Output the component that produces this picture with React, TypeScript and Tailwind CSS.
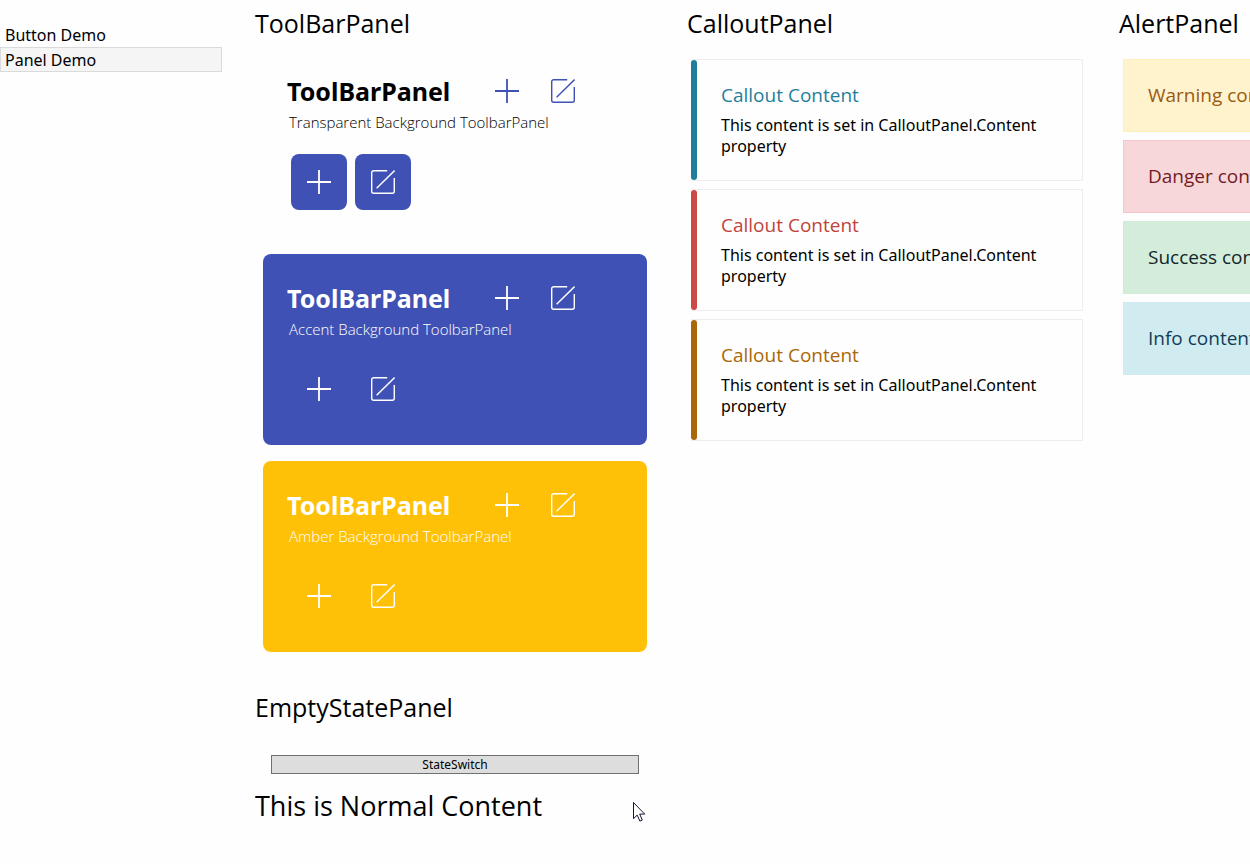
import { useState } from "react";

function PlusIcon() {
  return (
    <svg width="24" height="24" viewBox="0 0 24 24" fill="none" stroke="currentColor" strokeWidth="1.8" aria-hidden="true">
      <path d="M12 0v24M0 12h24" />
    </svg>
  );
}

function EditIcon() {
  return (
    <svg width="24" height="24" viewBox="0 0 24 24" fill="none" stroke="currentColor" strokeWidth="1.4" aria-hidden="true">
      <path d="M16.2 0.7H2.7a2 2 0 0 0-2 2v18.6a2 2 0 0 0 2 2h18.6a2 2 0 0 0 2-2V8" />
      <path d="M5.6 18.2L23.6 0.6" />
    </svg>
  );
}

type ToolBarProps = { subtitle: string; panel: string; iconColor: string; action: string };

function ToolBarPanel({ subtitle, panel, iconColor, action }: ToolBarProps) {
  const button = "flex size-14 items-center justify-center rounded-lg";
  return (
    <article className={`mx-2 flex h-[191px] flex-col rounded-lg px-6 pt-4 ${panel}`}>
      <div className="flex">
        <div className="flex w-48 shrink-0 flex-col pt-3">
          <h3 className="text-[25px] leading-8 font-bold">ToolBarPanel</h3>
          <p className="pl-[2px] font-['Open_Sans',sans-serif] text-[15px] leading-[30px] font-light whitespace-nowrap">{subtitle}</p>
        </div>
        <div className={`flex ${iconColor}`}>
          <button type="button" aria-label="Add" className={button}><PlusIcon /></button>
          <button type="button" aria-label="Edit" className={button}><EditIcon /></button>
        </div>
      </div>
      <div className="mt-[17px] flex gap-2 pl-1 text-white">
        <button type="button" aria-label="Add item" className={`${button} ${action}`}><PlusIcon /></button>
        <button type="button" aria-label="Edit item" className={`${button} ${action}`}><EditIcon /></button>
      </div>
    </article>
  );
}

const toolbars: ToolBarProps[] = [
  { subtitle: "Transparent Background ToolbarPanel", panel: "text-black", iconColor: "text-[#3f51b5]", action: "bg-[#3f51b5]" },
  { subtitle: "Accent Background ToolbarPanel", panel: "bg-[#3f51b5] text-white", iconColor: "text-white", action: "" },
  { subtitle: "Amber Background ToolbarPanel", panel: "bg-[#ffc107] text-white", iconColor: "text-white", action: "" },
];

const callouts = [
  { bar: "bg-[#1f7f9b]", title: "text-[#1f7f9b]" },
  { bar: "bg-[#cd4945]", title: "text-[#c0433a]" },
  { bar: "bg-[#aa6708]", title: "text-[#aa6708]" },
];

const alerts = [
  { text: "Warning content", style: "border-[#ffeeba] bg-[#fff3cd] text-[#9a5a14]" },
  { text: "Danger content", style: "border-[#f5c6cb] bg-[#f8d7da] text-[#721c24]" },
  { text: "Success content", style: "border-[#d1ebd8] bg-[#d4edda] text-[#12262b]" },
  { text: "Info content", style: "border-[#cfeaf0] bg-[#d1ecf1] text-[#123c58]" },
];

const heading = "pb-[2px] font-['Open_Sans',sans-serif] text-[25px] leading-[30px]";

export default function App() {
  const [empty, setEmpty] = useState(false);
  const [page, setPage] = useState("Panel Demo");

  return (
    <div className="flex min-h-screen overflow-hidden bg-[#fefefe] font-['Noto_Sans',sans-serif] text-black">
      <nav className="w-[222px] shrink-0 pt-[22px]">
        {["Button Demo", "Panel Demo"].map((name) => (
          <button
            key={name}
            type="button"
            onClick={() => setPage(name)}
            className={`block w-full border px-1 pt-[2px] text-left text-[16px] leading-[21px] ${
              page === name ? "border-[#dadada] bg-[#f5f5f5]" : "border-transparent"
            }`}
          >
            {name}
          </button>
        ))}
      </nav>
      <main className="flex flex-1 gap-8 overflow-hidden pt-2 pl-[33px]">
        <div className="w-[400px] shrink-0">
          <section>
            <h2 className={heading}>ToolBarPanel</h2>
            <div className="mt-[7px] flex flex-col gap-4">
              {toolbars.map((t) => (
                <ToolBarPanel key={t.subtitle} {...t} />
              ))}
            </div>
          </section>
          <section className="mt-10">
            <h2 className={heading}>EmptyStatePanel</h2>
            <div className="mt-[31px] px-4">
              <button
                type="button"
                onClick={() => setEmpty(!empty)}
                className="block w-full border border-[#707070] bg-[#dddddd] text-[12px] leading-[17px]"
              >
                StateSwitch
              </button>
            </div>
            <div className="relative mt-4">
              <p className="font-['Open_Sans',sans-serif] text-[27px] leading-8">{empty ? "" : "This is Normal Content"}</p>
              <svg className="absolute top-3 left-[378px]" width="13" height="21" viewBox="0 0 13 21" aria-hidden="true">
                <path d="M0.5 0.5v16.2l3.7-3.6 2.7 6 2.4-1-2.6-6h5z" fill="#fff" stroke="#15152f" />
              </svg>
            </div>
          </section>
        </div>
        <section className="w-[400px] shrink-0">
          <h2 className={heading}>CalloutPanel</h2>
          <div className="mt-[19px] flex flex-col gap-2 px-1">
            {callouts.map((c) => (
              <article key={c.bar} className="flex border border-l-0 border-[#eeeeee]">
                <div className={`w-[6px] shrink-0 rounded-full ${c.bar}`} />
                <div className="px-6 pt-[19px] pb-[23px]">
                  <h3 className={`font-['Open_Sans',sans-serif] text-[19px] leading-8 ${c.title}`}>Callout Content</h3>
                  <p className="pt-1 text-[16px] leading-[21px]">This content is set in CalloutPanel.Content property</p>
                </div>
              </article>
            ))}
          </div>
        </section>
        <section className="w-[400px] shrink-0">
          <h2 className={heading}>AlertPanel</h2>
          <div className="mt-[19px] flex flex-col gap-2 px-1">
            {alerts.map((a) => (
              <div
                key={a.text}
                role="alert"
                className={`border px-6 py-5 font-['Open_Sans',sans-serif] text-[19px] leading-[31px] ${a.style}`}
              >
                {a.text}
              </div>
            ))}
          </div>
        </section>
      </main>
    </div>
  );
}
